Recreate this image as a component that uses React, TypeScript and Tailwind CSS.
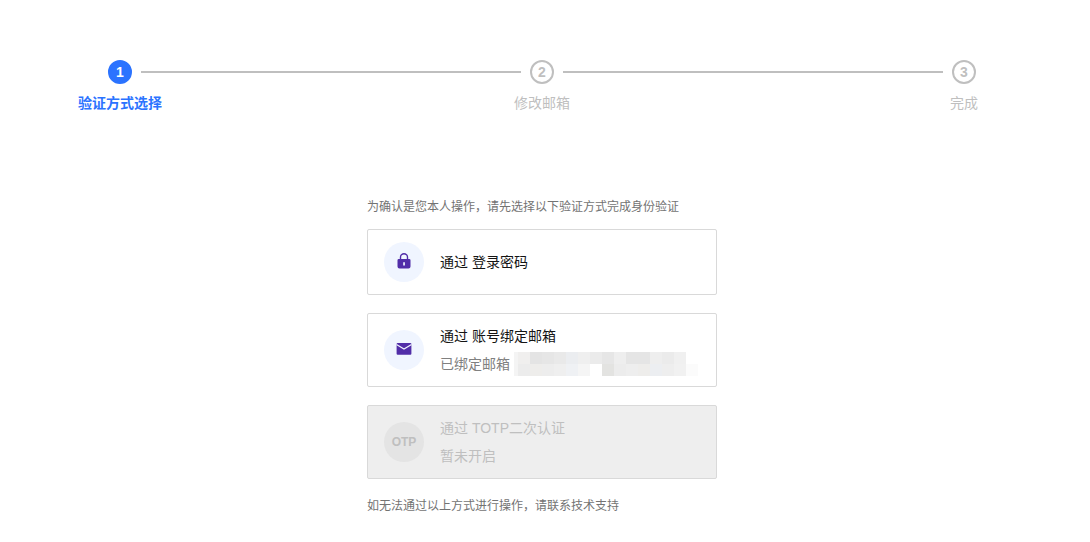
import { Fragment } from "react";
import type { FC, ReactNode } from "react";
import clsx from "clsx";

const steps = ["验证方式选择", "修改邮箱", "完成"];

const mosaicRows = [
  ["bg-[#f0efee]", "bg-[#e4e4e4]", "bg-[#e6e6e6]", "bg-[#e9e9e9]", "bg-[#ebedf0]", "bg-[#efefef]", "bg-[#ebebeb]", "bg-[#e6e6e6]", "bg-[#eeeeee]", "bg-[#e5e5e5]", "bg-[#e5e5e5]", "bg-[#eeeeee]", "bg-[#ebebeb]", "bg-[#f0f0f0]", "bg-white"],
  ["bg-[#ececec]", "bg-[#eeedeb]", "bg-[#ededed]", "bg-[#efefef]", "bg-[#eff1f4]", "bg-[#f5f5f5]", "bg-white", "bg-[#e3e3e1]", "bg-[#ececec]", "bg-[#eeeeee]", "bg-[#eeedeb]", "bg-[#eceef1]", "bg-[#eeeeee]", "bg-[#f1f1f1]", "bg-[#fbfbfb]"],
];

const LockIcon: FC = () => (
  <svg viewBox="0 0 16 16" className="w-4 h-4 mb-0.5" aria-hidden="true">
    <path d="M4.500 7V4.100a3.500 3.300 0 0 1 7 0V7" fill="none" stroke="#512da8" strokeWidth="1.400" />
    <path
      fillRule="evenodd"
      d="M2.800 6h10.400q1.300 0 1.300 1.300v6.200q0 2-2 2h-9q-2 0-2-2V7.300Q1.500 6 2.800 6zM7.200 9.200v3.200h1.700V9.200z"
      fill="#512da8"
    />
  </svg>
);

const MailIcon: FC = () => (
  <svg viewBox="0 0 16 16" className="w-4 h-4 mb-0.5" aria-hidden="true">
    <rect x="0.600" y="2" width="14.800" height="11.700" rx="1" fill="#512da8" />
    <path d="M0.500 3.600 8 8l7.500-4.400" fill="none" stroke="#f0f5ff" strokeWidth="1.200" />
  </svg>
);

const MaskedEmail: FC = () => (
  <span className="flex" role="img" aria-label="邮箱">
    <span className="w-1 h-6 bg-[#f4f4f4]" />
    <span className="flex flex-col">
      {mosaicRows.map((row, idx) => (
        <span key={idx} className="flex">
          {row.map((color, col) => (
            <span key={col} className={clsx("w-3 h-3", color)} />
          ))}
        </span>
      ))}
    </span>
  </span>
);

interface MethodProps {
  icon: ReactNode;
  title: string;
  detail?: ReactNode;
  disabled?: boolean;
}

const Method: FC<MethodProps> = ({ icon, title, detail, disabled }) => (
  <button
    type="button"
    disabled={disabled}
    className={clsx(
      "flex items-center gap-4 w-full min-h-[66px] px-4 py-2 border border-[#d9d9d9] rounded-xs text-left text-sm/7",
      disabled ? "bg-[#eeeeee] text-[#bfbfbf]" : "bg-white text-[#141414] cursor-pointer"
    )}
  >
    <span
      className={clsx(
        "flex items-center justify-center shrink-0 w-10 h-10 rounded-full",
        disabled ? "bg-[#e4e4e4]" : "bg-[#f0f5ff]"
      )}
    >
      {icon}
    </span>
    <span className="flex flex-col">
      <span>{title}</span>
      {detail && (
        <span className={clsx("flex items-center gap-1", !disabled && "text-[#808080]")}>{detail}</span>
      )}
    </span>
  </button>
);

export default function App() {
  return (
    <main className="pt-15 pr-1.5 bg-white font-['Liberation_Sans','Noto_Sans_CJK_SC',sans-serif]">
      <ol className="flex px-[99px]">
        {steps.map((label, idx) => {
          const active = idx === 0;
          return (
            <Fragment key={label}>
              {idx > 0 && <li aria-hidden="true" className="flex-1 h-0.5 mt-[11px] bg-[#bfbfbf]" />}
              <li
                aria-current={active ? "step" : undefined}
                className={clsx(
                  "flex flex-col items-center w-[42px] text-sm",
                  active ? "font-bold text-[#2b73ff]" : "text-[#bfbfbf]"
                )}
              >
                <span
                  className={clsx(
                    "flex items-center justify-center w-6 h-6 rounded-full border-2 font-bold",
                    active ? "border-[#2b73ff] bg-[#2b73ff] text-white" : "border-[#bfbfbf]"
                  )}
                >
                  {idx + 1}
                </span>
                <span className="mt-[9px] whitespace-nowrap">{label}</span>
              </li>
            </Fragment>
          );
        })}
      </ol>

      <section className="max-w-[350px] mx-auto mt-[84px] text-xs/5 text-[#737373]">
        <p>为确认是您本人操作，请先选择以下验证方式完成身份验证</p>
        <div className="flex flex-col gap-[18px] mt-3 mb-[17px]">
          <Method icon={<LockIcon />} title="通过 登录密码" />
          <Method
            icon={<MailIcon />}
            title="通过 账号绑定邮箱"
            detail={
              <>
                <span>已绑定邮箱</span>
                <MaskedEmail />
              </>
            }
          />
          <Method
            icon={<span className="text-xs font-bold">OTP</span>}
            title="通过 TOTP二次认证"
            detail="暂未开启"
            disabled
          />
        </div>
        <p>如无法通过以上方式进行操作，请联系技术支持</p>
      </section>
    </main>
  );
}
